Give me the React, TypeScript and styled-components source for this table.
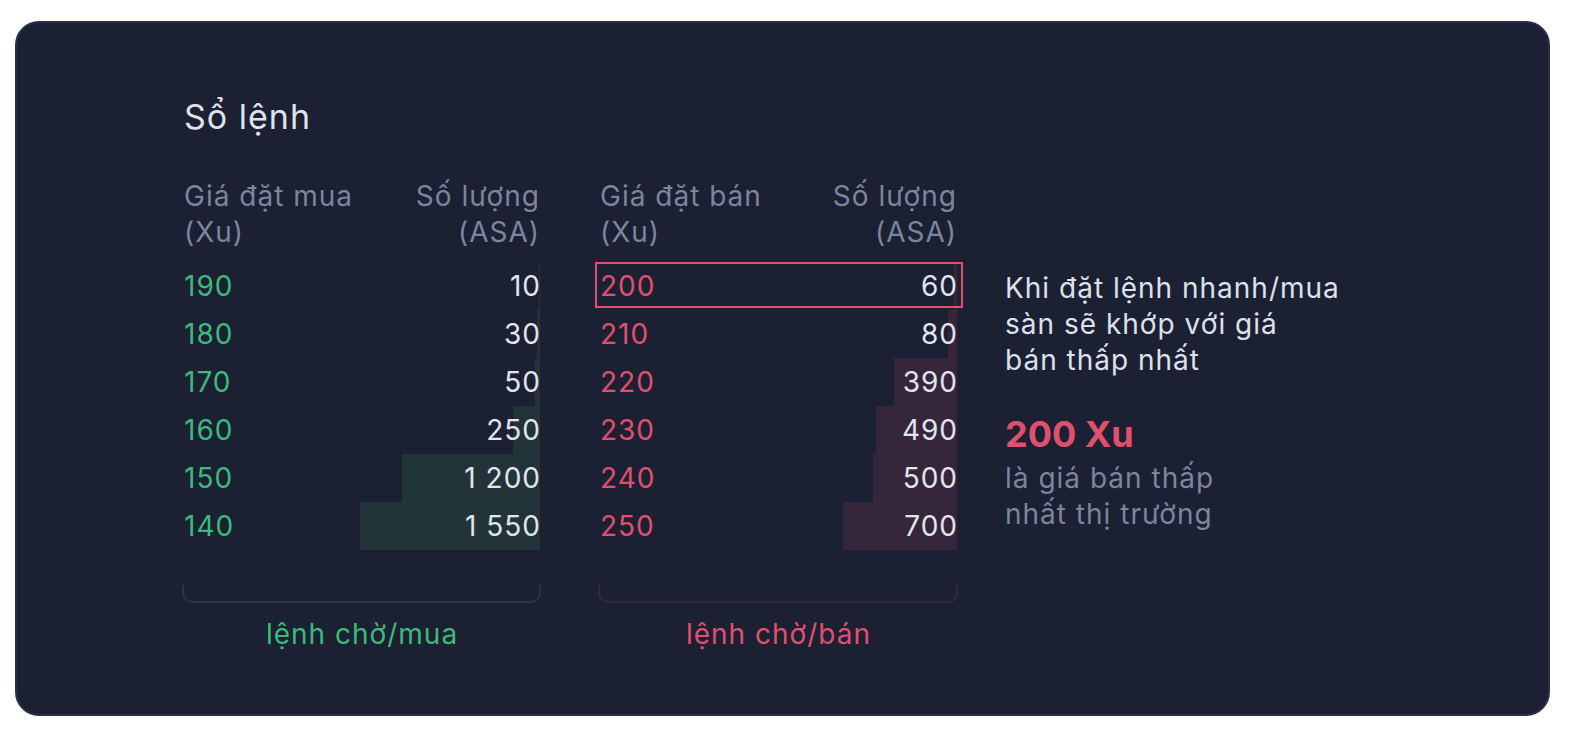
import React from 'react';
import styled, { createGlobalStyle } from 'styled-components';

const GlobalStyle = createGlobalStyle`
  html, body {
    margin: 0;
    background: #ffffff;
  }
  body {
    font-family: 'Inter', 'Noto Sans', sans-serif;
  }
`;

const Page = styled.div`
  padding: 21px 19px 16px 15px;
`;

const Card = styled.section`
  box-sizing: border-box;
  height: 695px;
  background: #1b2033;
  border: 2px solid #29304a;
  border-radius: 24px;
  padding: 74px 0 0 167px;
  letter-spacing: 1px;
`;

const Title = styled.h2`
  margin: 0;
  font-size: 34px;
  line-height: 40px;
  font-weight: 400;
  color: #dfe3ea;
`;

const Board = styled.div`
  display: flex;
  align-items: flex-start;
  margin-top: 41px;
`;

const Table = styled.div<{ $width: number; $gapRight?: number }>`
  display: flex;
  flex-direction: column;
  width: ${p => p.$width}px;
  margin-right: ${p => p.$gapRight ?? 0}px;
`;

const Header = styled.div`
  display: flex;
  justify-content: space-between;
  font-size: 28px;
  line-height: 36px;
  color: #7b859d;
  margin-bottom: 12px;
`;

const HeadCell = styled.div<{ $right?: boolean }>`
  text-align: ${p => (p.$right ? 'right' : 'left')};
`;

const Row = styled.div<{ $marked?: boolean }>`
  position: relative;
  display: flex;
  justify-content: space-between;
  align-items: center;
  height: 48px;
  font-size: 28px;

  ${p =>
    p.$marked &&
    `
    &::after {
      content: '';
      position: absolute;
      left: -5px;
      right: -6px;
      top: 0;
      bottom: 2px;
      border: 2px solid #e0506e;
      z-index: 2;
    }
  `}
`;

const Depth = styled.div<{ $side: 'buy' | 'sell' }>`
  position: absolute;
  top: 0;
  right: 0;
  bottom: 0;
  background: ${p => (p.$side === 'buy' ? '#223439' : '#35263a')};
  z-index: 0;
`;

const Price = styled.span<{ $side: 'buy' | 'sell' }>`
  position: relative;
  z-index: 1;
  color: ${p => (p.$side === 'buy' ? '#3dba7a' : '#e0506e')};
`;

const Amount = styled.span`
  position: relative;
  z-index: 1;
  margin-right: -1px;
  color: #e1e5ec;
`;

const Bracket = styled.div<{ $side: 'buy' | 'sell' }>`
  height: 16px;
  margin: 35px -1px 0 -2px;
  border: 2px solid ${p => (p.$side === 'buy' ? '#1f3a3a' : '#3a2838')};
  border-top: none;
  border-radius: 0 0 10px 10px;
`;

const Caption = styled.div<{ $side: 'buy' | 'sell' }>`
  margin-top: 13px;
  text-align: center;
  font-size: 28px;
  line-height: 36px;
  color: ${p => (p.$side === 'buy' ? '#3dba7a' : '#e0506e')};
`;

const SideNote = styled.div`
  margin: 92px 0 0 48px;
  font-size: 28px;
  line-height: 36px;
  color: #dde1ea;
`;

const Highlight = styled.div`
  margin-top: 36px;
  font-size: 36px;
  line-height: 40px;
  font-weight: 700;
  letter-spacing: 0;
  color: #e0506e;
`;

const Muted = styled.div`
  margin-top: 6px;
  color: #7b859d;
`;

type Level = { price: number; amount: string; depth: number };

const bids: Level[] = [
  { price: 190, amount: '10', depth: 1 },
  { price: 180, amount: '30', depth: 3 },
  { price: 170, amount: '50', depth: 5 },
  { price: 160, amount: '250', depth: 27 },
  { price: 150, amount: '1 200', depth: 138 },
  { price: 140, amount: '1 550', depth: 180 },
];

const asks: Level[] = [
  { price: 200, amount: '60', depth: 3 },
  { price: 210, amount: '80', depth: 9 },
  { price: 220, amount: '390', depth: 63 },
  { price: 230, amount: '490', depth: 81 },
  { price: 240, amount: '500', depth: 84 },
  { price: 250, amount: '700', depth: 114 },
];

const Side: React.FC<{
  side: 'buy' | 'sell';
  priceLabel: string;
  levels: Level[];
  caption: string;
  width: number;
  gapRight?: number;
}> = ({ side, priceLabel, levels, caption, width, gapRight }) => (
  <Table $width={width} $gapRight={gapRight}>
    <Header>
      <HeadCell>
        {priceLabel}
        <br />
        (Xu)
      </HeadCell>
      <HeadCell $right>
        Số lượng
        <br />
        (ASA)
      </HeadCell>
    </Header>
    {levels.map((l, i) => (
      <Row key={l.price} $marked={side === 'sell' && i === 0}>
        <Depth $side={side} style={{ width: l.depth }} />
        <Price $side={side}>{l.price}</Price>
        <Amount>{l.amount}</Amount>
      </Row>
    ))}
    <Bracket $side={side} />
    <Caption $side={side}>{caption}</Caption>
  </Table>
);

const App: React.FC = () => (
  <Page>
    <GlobalStyle />
    <Card>
      <Title>Sổ lệnh</Title>
      <Board>
        <Side side="buy" priceLabel="Giá đặt mua" levels={bids} caption="lệnh chờ/mua" width={356} gapRight={60} />
        <Side side="sell" priceLabel="Giá đặt bán" levels={asks} caption="lệnh chờ/bán" width={357} />
        <SideNote>
          Khi đặt lệnh nhanh/mua
          <br />
          sàn sẽ khớp với giá
          <br />
          bán thấp nhất
          <Highlight>200 Xu</Highlight>
          <Muted>
            là giá bán thấp
            <br />
            nhất thị trường
          </Muted>
        </SideNote>
      </Board>
    </Card>
  </Page>
);

export default App;
